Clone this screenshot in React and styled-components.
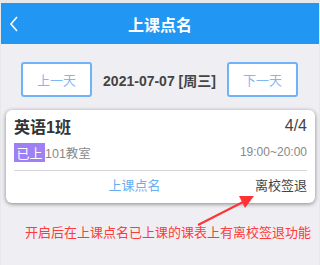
import React from 'react';
import styled, { createGlobalStyle } from 'styled-components';

const GlobalStyle = createGlobalStyle`
  html, body {
    margin: 0;
    padding: 0;
    background: #e8e8ea;
  }
  body {
    font-family: "Liberation Sans", "Noto Sans CJK SC", sans-serif;
  }
`;

const Page = styled.div`
  height: 100vh;
  overflow: hidden;
  padding: 3px 1px 0;
  box-sizing: border-box;
  display: flex;
  flex-direction: column;
`;

const Body = styled.div`
  flex: 1;
  position: relative;
  background: #efeff3;
`;

const Header = styled.header`
  height: 41px;
  flex-shrink: 0;
  background: #2196f3;
  display: flex;
  align-items: center;
  justify-content: center;
  position: relative;
`;

const BackButton = styled.span`
  position: absolute;
  left: 8px;
  top: 12px;
  display: flex;
`;

const HeaderTitle = styled.h1`
  margin: 0;
  color: #fff;
  font-size: 16px;
  font-weight: 700;
`;

const DateBar = styled.div`
  display: flex;
  align-items: center;
  justify-content: center;
  gap: 11px;
  padding: 18px 0 13px;
  margin-left: -1px;
`;

const DayButton = styled.button`
  width: 71px;
  height: 35px;
  box-sizing: border-box;
  border: 2px solid #6fb2f6;
  border-radius: 3px;
  background: #fff;
  color: #7fb9f3;
  font-family: inherit;
  font-size: 13px;
  padding: 0;
`;

const DateText = styled.span`
  font-size: 14px;
  font-weight: 700;
  color: #444;
  white-space: nowrap;
`;

const Card = styled.div`
  margin: 0 4px 0 5px;
  background: #fff;
  border-radius: 6px;
  box-shadow: 0 1px 4px rgba(0, 0, 0, 0.45);
  padding: 6px 8px 6px;
`;

const Row = styled.div`
  display: flex;
  align-items: center;
  justify-content: space-between;
  height: ${p => p.$h}px;
  margin-top: ${p => p.$mt || 0}px;
`;

const ClassName = styled.span`
  font-size: 16px;
  font-weight: 700;
  color: #333;
`;

const Count = styled.span`
  font-size: 16px;
  color: #444;
`;

const Room = styled.span`
  display: flex;
  align-items: center;
  font-size: 12.5px;
  color: #888;
`;

const Badge = styled.span`
  display: inline-flex;
  align-items: center;
  justify-content: center;
  width: 31px;
  height: 19px;
  background: #9e7ff4;
  color: #fff;
  font-size: 13px;
`;

const Time = styled.span`
  font-size: 12px;
  color: #888;
`;

const Divider = styled.div`
  height: 1px;
  background: #d6d6d6;
  margin-top: 8px;
`;

const Actions = styled.div`
  display: grid;
  grid-template-columns: 1fr auto;
  align-items: center;
  height: 26px;
`;

const Action = styled.span`
  font-size: 13px;
  color: ${p => (p.$primary ? '#6aaef2' : '#444')};
  text-align: ${p => (p.$primary ? 'center' : 'right')};
`;

const Note = styled.p`
  margin: 20px 0 0;
  padding-left: 24px;
  font-family: "Noto Sans CJK SC", sans-serif;
  font-size: 13px;
  line-height: 18px;
  color: #ff3a3a;
  white-space: nowrap;
`;

const Arrow = styled.svg`
  position: absolute;
  left: 0;
  top: 0;
  pointer-events: none;
`;

export default function App() {
  return (
    <>
      <GlobalStyle />
      <Page>
        <Header>
          <BackButton>
            <svg width="12" height="18" viewBox="0 0 12 18">
              <path d="M8 2 L2 9 L8 16" fill="none" stroke="#fff" strokeWidth="1.6" />
            </svg>
          </BackButton>
          <HeaderTitle>上课点名</HeaderTitle>
        </Header>
        <Body>
          <DateBar>
            <DayButton>上一天</DayButton>
            <DateText>2021-07-07 [周三]</DateText>
            <DayButton>下一天</DayButton>
          </DateBar>
          <Card>
            <Row $h={20}>
              <ClassName>英语1班</ClassName>
              <Count>4/4</Count>
            </Row>
            <Row $h={20} $mt={6}>
              <Room>
                <Badge>已上</Badge>
                101教室
              </Room>
              <Time>19:00~20:00</Time>
            </Row>
            <Divider />
            <Actions>
              <Action $primary>上课点名</Action>
              <Action>离校签退</Action>
            </Actions>
          </Card>
          <Note>开启后在上课点名已上课的课表上有离校签退功能</Note>
          <Arrow width="318" height="218" viewBox="0 0 318 218">
            <line x1="197" y1="181" x2="244" y2="157" stroke="#f33" strokeWidth="2" />
            <polygon points="253,152 238,152 244,164" fill="#f33" />
          </Arrow>
        </Body>
      </Page>
    </>
  );
}
